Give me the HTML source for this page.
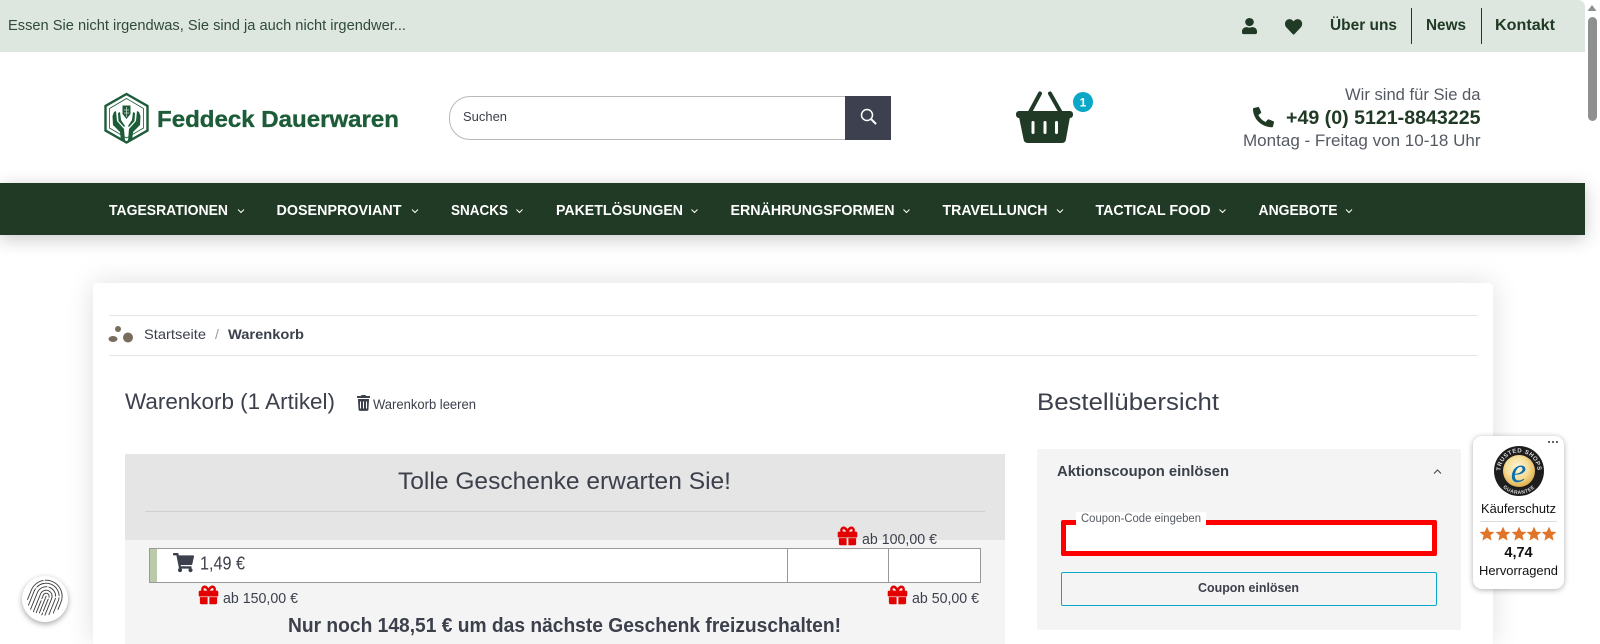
<!DOCTYPE html>
<html lang="de">
<head>
<meta charset="utf-8">
<title>Warenkorb - Feddeck Dauerwaren</title>
<style>
html,body{margin:0;padding:0;width:1600px;height:644px;overflow:hidden;background:#fff}
#page{position:relative;width:1600px;height:644px;overflow:hidden;background:#fff}
.b{position:absolute;box-sizing:border-box}
svg{position:absolute;left:0;top:0}
text{font-family:"Liberation Sans",sans-serif;fill:#3c404c}
.bd{font-weight:700}
.nav text{fill:#fff;font-weight:700;font-size:15px}
.top{fill:#203a25;font-weight:700;font-size:16px}
</style>
</head>
<body>
<div id="page">
<div class="b" style="left:93px;top:283px;width:1400px;height:361px;background:#fff;border-radius:4px 4px 0 0;box-shadow:0 0 28px rgba(0,0,0,.13)"></div>
<div class="b" style="left:0;top:0;width:1585px;height:52px;background:#dde6df;border-top-right-radius:7px"></div>
<div class="b" style="left:0;top:183px;width:1585px;height:52px;background:#203a25;box-shadow:0 4px 18px rgba(0,0,0,.22)"></div>
<div class="b" style="left:449px;top:96px;width:400px;height:44px;border:1px solid #b9b9b9;border-radius:21px 0 0 21px;background:#fff"></div>
<div class="b" style="left:845px;top:96px;width:46px;height:44px;background:#3d414f"></div>
<div class="b" style="left:109px;top:315px;width:1369px;height:41px;border-top:1px solid #e6e6e6;border-bottom:1px solid #e6e6e6"></div>
<div class="b" style="left:125px;top:540px;width:880px;height:104px;background:#f4f4f4"></div>
<div class="b" style="left:125px;top:454px;width:880px;height:86px;background:#e5e5e5"></div>
<div class="b" style="left:145px;top:511px;width:840px;height:1px;background:#cfcfcf"></div>
<div class="b" style="left:149px;top:548px;width:832px;height:35px;background:#fff;border:1px solid #999"></div>
<div class="b" style="left:150px;top:549px;width:7px;height:33px;background:#b9cba9"></div>
<div class="b" style="left:787px;top:549px;width:1px;height:33px;background:#999"></div>
<div class="b" style="left:888px;top:549px;width:1px;height:33px;background:#999"></div>
<div class="b" style="left:1037px;top:449px;width:424px;height:181px;background:#f4f4f4;border-radius:2px"></div>
<div class="b" style="left:1061px;top:520px;width:376px;height:36px;background:#fff;border:5px solid #f00;border-radius:2px"></div>
<div class="b" style="left:1076px;top:512px;width:130px;height:13px;background:#fff"></div>
<div class="b" style="left:1061px;top:572px;width:376px;height:34px;border:1px solid #0aa7c7;border-radius:2px"></div>
<div class="b" style="left:1473px;top:436px;width:91px;height:153px;background:#fff;border-radius:9px;box-shadow:0 1px 6px rgba(0,0,0,.32)"></div>
<div class="b" style="left:22px;top:576px;width:46px;height:46px;background:#fff;border-radius:50%;box-shadow:0 2px 6px rgba(0,0,0,.35)"></div>
<div class="b" style="left:1588px;top:17px;width:9px;height:104px;background:#8f8f8f;border-radius:5px"></div>

<svg width="1600" height="644" viewBox="0 0 1600 644" xmlns="http://www.w3.org/2000/svg">
<defs>
<path id="gift" d="M32 448c0 17.7 14.3 32 32 32h160V320H32v128zm256 32h160c17.7 0 32-14.3 32-32V320H288v160zm192-320h-42.1c6.2-12.1 10.1-25.5 10.1-40 0-48.5-39.5-88-88-88-41.6 0-68.5 21.3-103 68.3-34.5-47-61.4-68.3-103-68.3-48.5 0-88 39.5-88 88 0 14.5 3.8 27.9 10.1 40H32c-17.7 0-32 14.3-32 32v80c0 8.8 7.2 16 16 16h480c8.8 0 16-7.2 16-16v-80c0-17.7-14.3-32-32-32zm-326.1 0c-22.1 0-40-17.9-40-40s17.9-40 40-40c19.9 0 34.6 3.3 86.1 80h-86.1zm206.1 0h-86.1c51.4-76.5 65.7-80 86.1-80 22.1 0 40 17.9 40 40s-17.9 40-40 40z"/>
<path id="star" d="M0-7.4 2.2-2.4 7.4-2 3.4 1.4 4.6 6.6 0 3.8-4.6 6.6-3.4 1.4-7.4-2-2.2-2.4Z"/>
<radialGradient id="gold" cx="45%" cy="40%" r="65%"><stop offset="0" stop-color="#fff8dc"/><stop offset=".55" stop-color="#f5dc96"/><stop offset="1" stop-color="#d9a63e"/></radialGradient>
<path id="ringT" d="M1502.980 480.250A18.500 18.500 0 1 1 1535.020 480.250"/>
<path id="ringB" d="M1496 471a23 23 0 0 0 46 0"/>
</defs>

<!-- top bar -->
<text x="8" y="30" font-size="14.500" style="fill:#2f4a38" textLength="398" lengthAdjust="spacingAndGlyphs">Essen Sie nicht irgendwas, Sie sind ja auch nicht irgendwer...</text>
<path transform="translate(1242 18) scale(.0335 .0315)" fill="#203a25" d="M224 256c70.700 0 128-57.300 128-128S294.700 0 224 0 96 57.300 96 128s57.300 128 128 128zm89.600 32h-16.700c-22.200 10.200-46.900 16-72.900 16s-50.600-5.800-72.900-16h-16.700C60.200 288 0 348.200 0 422.400V464c0 26.500 21.500 48 48 48h352c26.500 0 48-21.500 48-48v-41.600c0-74.200-60.200-134.400-134.400-134.400z"/>
<path transform="translate(1285 18) scale(.0335 .0345)" fill="#203a25" d="M462.300 62.600C407.500 15.900 326 24.300 275.700 76.200L256 96.500l-19.700-20.300C186.100 24.300 104.500 15.900 49.700 62.600c-62.800 53.600-66.100 149.800-9.900 207.900l193.500 199.800c12.500 12.900 32.800 12.900 45.300 0l193.500-199.800c56.300-58.100 53-154.300-9.800-207.900z"/>
<text class="top" style="fill:#203a25" x="1330" y="30" textLength="67" lengthAdjust="spacingAndGlyphs">Über uns</text>
<text class="top" style="fill:#203a25" x="1426" y="30" textLength="40" lengthAdjust="spacingAndGlyphs">News</text>
<text class="top" style="fill:#203a25" x="1495" y="30" textLength="60" lengthAdjust="spacingAndGlyphs">Kontakt</text>
<path d="M1411.500 8V44M1481.500 8V44" stroke="#203a25" stroke-width="1"/>
<path d="M1592 5 1596.500 11H1587.500Z" fill="#8f8f8f"/>

<!-- logo -->
<g fill="none" stroke="#1c5c38">
<path d="M126.500 94 147.500 106V130.500L126.500 142.500 105.500 130.500V106Z" stroke-width="2.400" stroke-linejoin="miter"/>
<path d="M126.500 98.500 143.500 108.500V128L126.500 138 109.500 128V108.500Z" stroke-width=".8"/>
</g>
<g fill="#1c5c38">
<path d="M114 112 116 111 117 121 124 129 125 141H121L120 132 113 125 112.500 116Z"/>
<path d="M139 112 137 111 136 121 129 129 128 141H132L133 132 140 125 140.500 116Z"/>
<path d="M118 113 120 112 121 120 125 126 124 127 118.500 121Z"/>
<path d="M135 113 133 112 132 120 128 126 129 127 134.500 121Z"/>
<path d="M122.500 105.500H130.500V114L126.500 119 122.500 114Z"/>
</g>
<path d="M126.500 107V117M124 110H129M124 113H129" stroke="#fff" stroke-width=".7" opacity=".8"/>
<text class="bd" x="157" y="127" font-size="23.500" style="fill:#1c5c38;stroke:#1c5c38;stroke-width:.35" textLength="242" lengthAdjust="spacingAndGlyphs">Feddeck Dauerwaren</text>

<!-- search -->
<text x="463" y="121" font-size="13" textLength="44" lengthAdjust="spacingAndGlyphs">Suchen</text>
<circle cx="867" cy="115" r="5.500" fill="none" stroke="#fff" stroke-width="1.500"/>
<path d="M871 119 875.500 123.500" stroke="#fff" stroke-width="2" stroke-linecap="round"/>

<!-- basket -->
<path d="M1030 112 1040 93.500M1060.500 112 1050 93.500" stroke="#203a25" stroke-width="4" stroke-linecap="round"/>
<rect x="1016" y="111" width="57" height="7" rx="3" fill="#203a25"/>
<path d="M1019 117H1070L1066 139Q1065.500 143 1062 143H1028Q1024 143 1023.500 139Z" fill="#203a25"/>
<path d="M1033 122.500V132.500M1045 122.500V132.500M1056.500 122.500V132.500" stroke="#fff" stroke-width="3" stroke-linecap="round"/>
<circle cx="1083" cy="102" r="10" fill="#0aa7c7"/>
<text class="bd" x="1083" y="106.500" font-size="12" text-anchor="middle" style="fill:#fff">1</text>

<!-- contact -->
<text x="1345" y="100" font-size="17" style="fill:#555a62" textLength="135.500" lengthAdjust="spacingAndGlyphs">Wir sind für Sie da</text>
<path transform="translate(1274 107) scale(-.041 .0395)" fill="#203a25" d="M493.400 24.600l-104-24c-11.300-2.600-22.900 3.300-27.500 13.900l-48 112c-4.200 9.800-1.400 21.300 6.900 28l60.600 49.600c-36 76.700-98.900 140.500-177.200 177.200l-49.600-60.600c-6.800-8.300-18.200-11.100-28-6.900l-112 48C3.900 366.500-2 378.100.6 389.400l24 104C27.100 504.200 36.700 512 48 512c256.100 0 464-207.500 464-464 0-11.200-7.700-20.900-18.600-23.400z"/>
<text class="bd" x="1286" y="124" font-size="19" style="fill:#203a25" textLength="194.500" lengthAdjust="spacingAndGlyphs">+49 (0) 5121-8843225</text>
<text x="1243" y="146" font-size="17" style="fill:#555a62" textLength="237.500" lengthAdjust="spacingAndGlyphs">Montag - Freitag von 10-18 Uhr</text>

<!-- nav -->
<g class="nav">
<text x="109" y="215" textLength="119" lengthAdjust="spacingAndGlyphs">TAGESRATIONEN</text>
<text x="276.500" y="215" textLength="125" lengthAdjust="spacingAndGlyphs">DOSENPROVIANT</text>
<text x="451" y="215" textLength="57" lengthAdjust="spacingAndGlyphs">SNACKS</text>
<text x="556" y="215" textLength="127" lengthAdjust="spacingAndGlyphs">PAKETLÖSUNGEN</text>
<text x="730.500" y="215" textLength="164" lengthAdjust="spacingAndGlyphs">ERNÄHRUNGSFORMEN</text>
<text x="942.500" y="215" textLength="105" lengthAdjust="spacingAndGlyphs">TRAVELLUNCH</text>
<text x="1095.500" y="215" textLength="115" lengthAdjust="spacingAndGlyphs">TACTICAL FOOD</text>
<text x="1258.500" y="215" textLength="79" lengthAdjust="spacingAndGlyphs">ANGEBOTE</text>
</g>
<path d="M238 209.500l3 3 3-3M412 209.500l3 3 3-3M516.500 209.500l3 3 3-3M691.500 209.500l3 3 3-3M903.500 209.500l3 3 3-3M1057 209.500l3 3 3-3M1219.500 209.500l3 3 3-3M1346 209.500l3 3 3-3" fill="none" stroke="#fff" stroke-width="1"/>

<!-- breadcrumb -->
<g fill="#786c5c"><circle cx="118" cy="329" r="3"/><ellipse cx="113" cy="339" rx="4.500" ry="3"/><circle cx="128" cy="337.500" r="5"/></g>
<text x="144" y="339" font-size="14" textLength="62" lengthAdjust="spacingAndGlyphs">Startseite</text>
<text x="215" y="339" font-size="14" style="fill:#999">/</text>
<text class="bd" x="228" y="339" font-size="14" textLength="76" lengthAdjust="spacingAndGlyphs">Warenkorb</text>

<!-- headings -->
<text x="125" y="409" font-size="22" textLength="210" lengthAdjust="spacingAndGlyphs">Warenkorb (1 Artikel)</text>
<path transform="translate(357 395) scale(.029 .031)" fill="#3c404c" d="M432 32H312l-9.400-18.700A24 24 0 0 0 281.100 0H166.800a23.720 23.720 0 0 0-21.400 13.300L136 32H16A16 16 0 0 0 0 48v32a16 16 0 0 0 16 16h416a16 16 0 0 0 16-16V48a16 16 0 0 0-16-16zM53.200 467a48 48 0 0 0 47.900 45h245.800a48 48 0 0 0 47.900-45L416 128H32z"/>
<path d="M360.500 401.500V408.500M363.500 401.500V408.500M366.500 401.500V408.500" stroke="#fff" stroke-width="1"/>
<text x="373" y="409" font-size="13.500" textLength="103" lengthAdjust="spacingAndGlyphs">Warenkorb leeren</text>
<text x="1037" y="410" font-size="24" textLength="182" lengthAdjust="spacingAndGlyphs">Bestellübersicht</text>

<!-- gifts -->
<text x="398" y="489" font-size="24" textLength="333" lengthAdjust="spacingAndGlyphs">Tolle Geschenke erwarten Sie!</text>
<path transform="translate(173 553) scale(.0365 .0375)" fill="#3c404c" d="M528.120 301.319l47.273-208C578.806 78.301 567.391 64 551.990 64H159.208l-9.166-44.810C147.758 8.021 137.930 0 126.529 0H24C10.745 0 0 10.745 0 24v16c0 13.255 10.745 24 24 24h69.883l70.248 343.435C147.325 417.100 136 435.222 136 456c0 30.928 25.072 56 56 56s56-25.072 56-56c0-15.674-6.447-29.835-16.824-40h209.647C430.447 426.165 424 440.326 424 456c0 30.928 25.072 56 56 56s56-25.072 56-56c0-22.172-12.888-41.332-31.579-50.405l5.517-24.276c3.413-15.018-8.002-29.319-23.403-29.319H218.117l-6.545-32h293.145c11.206 0 20.920-7.754 23.403-18.681z"/>
<text x="200" y="569.500" font-size="18.500" textLength="45" lengthAdjust="spacingAndGlyphs">1,49 €</text>
<use href="#gift" transform="translate(199 584.500) scale(.0371 .0405)" fill="#e30000" stroke="#e30000" stroke-width="16"/>
<use href="#gift" transform="translate(838 525.500) scale(.0371 .0405)" fill="#e30000" stroke="#e30000" stroke-width="16"/>
<use href="#gift" transform="translate(888 584.500) scale(.0371 .0405)" fill="#e30000" stroke="#e30000" stroke-width="16"/>
<text x="223" y="603" font-size="14.500" textLength="75" lengthAdjust="spacingAndGlyphs">ab 150,00 €</text>
<text x="862" y="544" font-size="14.500" textLength="75" lengthAdjust="spacingAndGlyphs">ab 100,00 €</text>
<text x="912" y="603" font-size="14.500" textLength="67" lengthAdjust="spacingAndGlyphs">ab 50,00 €</text>
<text class="bd" x="288" y="632" font-size="20.500" textLength="553" lengthAdjust="spacingAndGlyphs">Nur noch 148,51 € um das nächste Geschenk freizuschalten!</text>

<!-- coupon -->
<text class="bd" x="1057" y="476" font-size="15" textLength="172" lengthAdjust="spacingAndGlyphs">Aktionscoupon einlösen</text>
<path d="M1434 473.500l3.500-3.500 3.500 3.500" fill="none" stroke="#3c404c" stroke-width="1"/>
<text x="1081" y="522" font-size="11.500" style="fill:#555a62" textLength="120" lengthAdjust="spacingAndGlyphs">Coupon-Code eingeben</text>
<text class="bd" x="1198" y="592" font-size="13" textLength="101" lengthAdjust="spacingAndGlyphs">Coupon einlösen</text>

<!-- trusted shops -->
<g fill="#333"><circle cx="1549" cy="442" r="1"/><circle cx="1553" cy="442" r="1"/><circle cx="1557" cy="442" r="1"/></g>
<circle cx="1519" cy="471" r="25" fill="#1d1d1d"/>
<circle cx="1519" cy="471" r="16" fill="url(#gold)"/>
<text font-size="6" class="bd" style="fill:#ddd" letter-spacing=".5"><textPath href="#ringT" startOffset="50%" text-anchor="middle">TRUSTED SHOPS</textPath></text>
<text font-size="5" class="bd" style="fill:#ddd" letter-spacing=".4"><textPath href="#ringB" startOffset="50%" text-anchor="middle">GUARANTEE</textPath></text>
<text x="1518.500" y="482" font-size="35" text-anchor="middle" style="font-family:'Liberation Serif',serif;font-style:italic;fill:#0b6fae">e</text>
<text x="1481" y="513" font-size="13" style="fill:#111" textLength="75" lengthAdjust="spacingAndGlyphs">Käuferschutz</text>
<path d="M1480 521.500H1557" stroke="#ddd"/>
<g fill="#e0752a"><use href="#star" x="1487" y="534"/><use href="#star" x="1503" y="534"/><use href="#star" x="1519" y="534"/><use href="#star" x="1534" y="534"/><use href="#star" x="1549" y="534"/></g>
<text class="bd" x="1518.500" y="557" font-size="14.500" text-anchor="middle" style="fill:#111">4,74</text>
<text x="1479" y="575" font-size="13" style="fill:#111" textLength="79" lengthAdjust="spacingAndGlyphs">Hervorragend</text>

<!-- fingerprint -->
<g transform="rotate(22 45 599)" fill="none" stroke="#3a3a3a" stroke-width=".9" stroke-linecap="round">
<path d="M29 606V596a16 16 0 0 1 32 0V604" stroke-dasharray="26 2 40 3"/>
<path d="M32 611V596a13 13 0 0 1 26 0V609" stroke-dasharray="18 2 30 2"/>
<path d="M35.500 614V596a9.500 9.500 0 0 1 19 0V612" stroke-dasharray="30 2 12 2"/>
<path d="M39 615V596a6 6 0 0 1 12 0V614"/>
<path d="M42 615V596a3 3 0 0 1 6 0V615" stroke-dasharray="13 2"/>
<path d="M45 596V614"/>
</g>
</svg>
</div>
</body>
</html>
